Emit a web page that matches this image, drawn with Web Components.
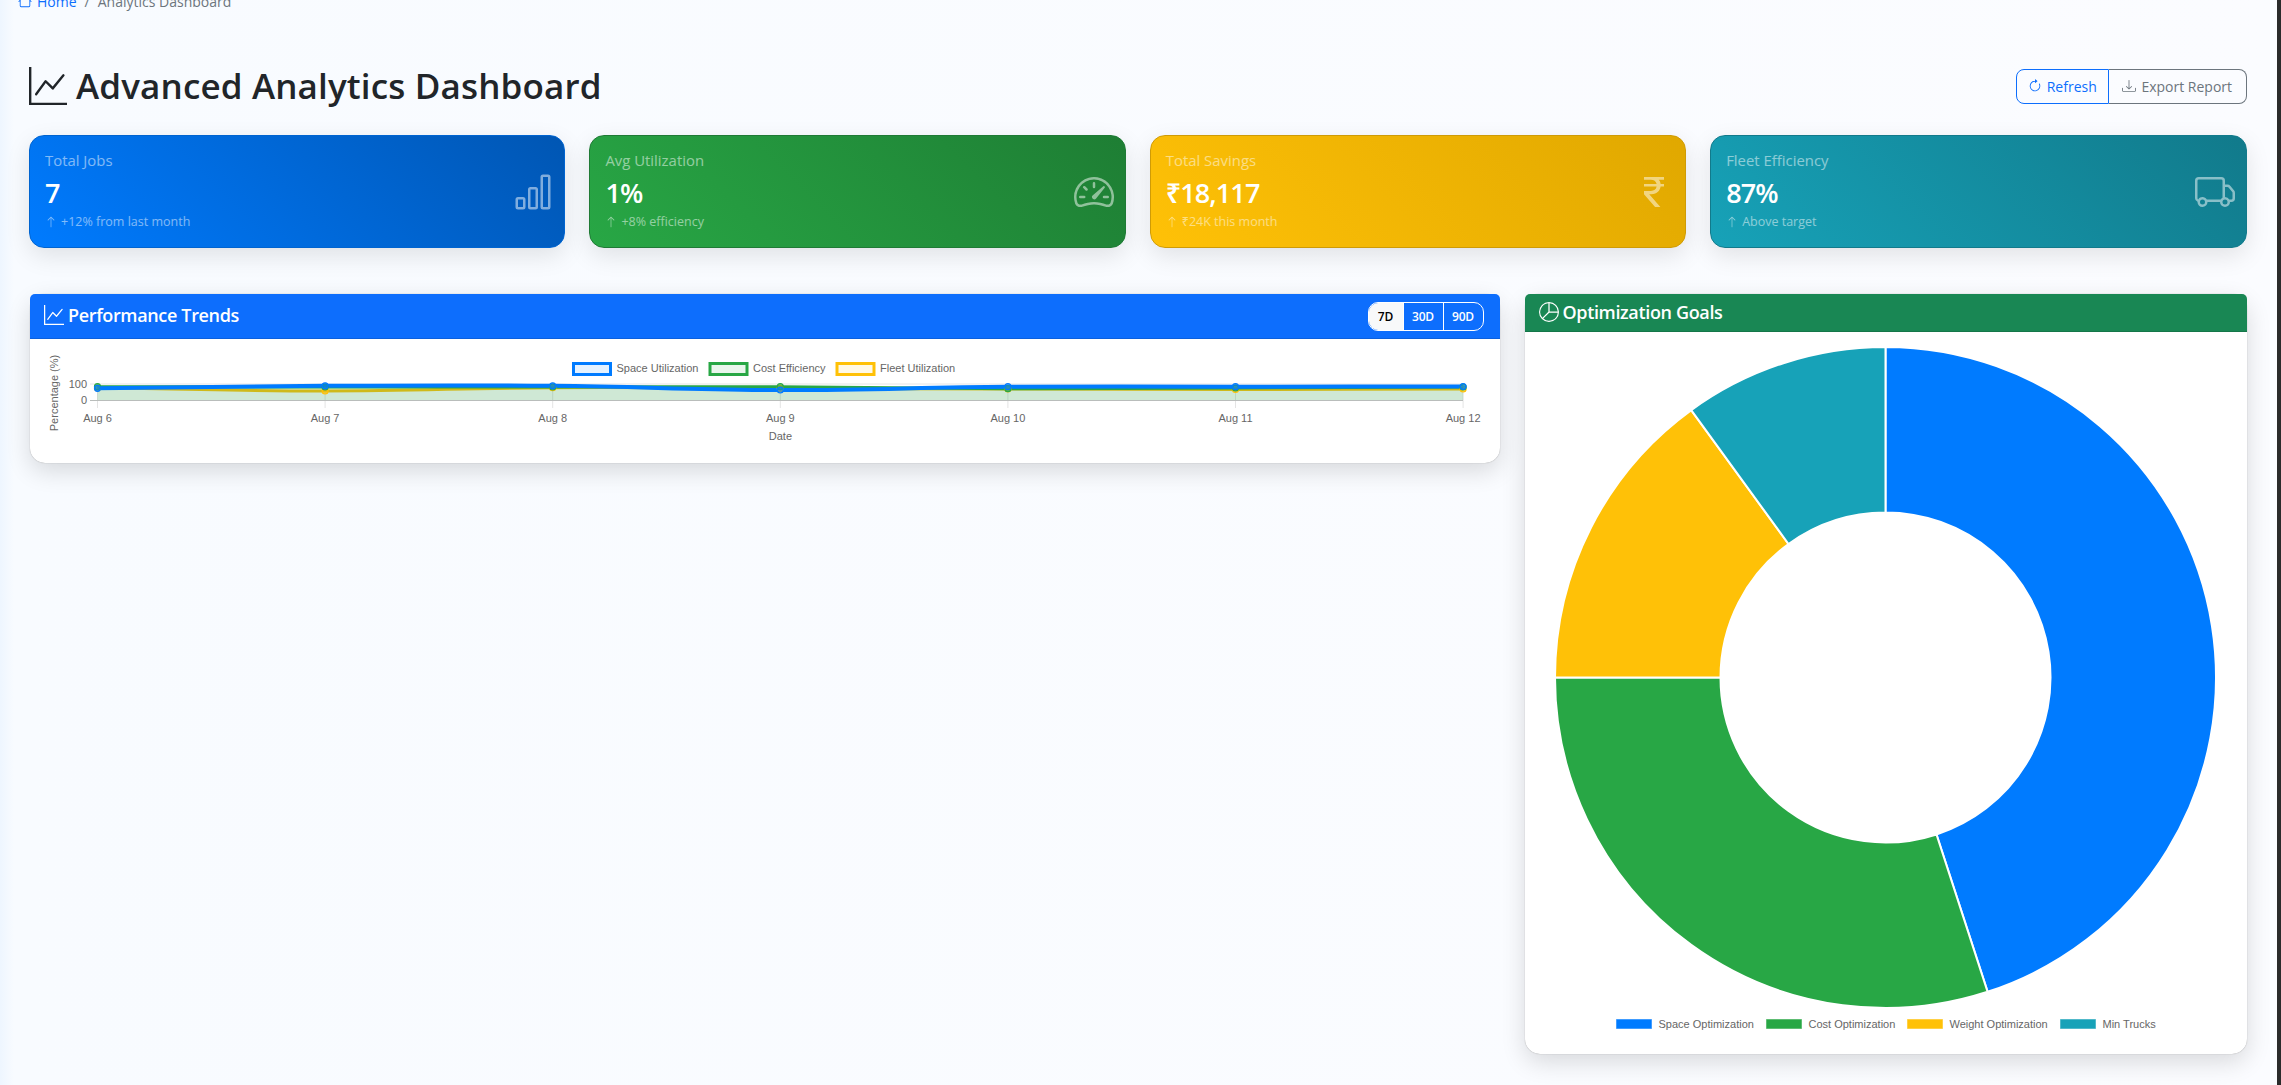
<!DOCTYPE html>
<html lang="en">
<head>
<meta charset="utf-8">
<title>Advanced Analytics Dashboard</title>
<style>
  html, body { margin: 0; height: 100%; }
  body { font-family: "Open Sans", "Noto Sans", sans-serif; color: #212529; }
</style>
</head>
<body>
<analytics-page>
  <nav-crumbs slot="crumbs"></nav-crumbs>
  <page-title slot="title">Advanced Analytics Dashboard</page-title>
  <action-buttons slot="actions"></action-buttons>

  <kpi-card slot="kpis" label="Total Jobs" value="7" note="+12% from last month" icon="bars" from="#007bff" to="#0056b3" edge="#0064d0"></kpi-card>
  <kpi-card slot="kpis" label="Avg Utilization" value="1%" note="+8% efficiency" icon="speed" from="#28a745" to="#1e7e34" edge="#1f7a35"></kpi-card>
  <kpi-card slot="kpis" label="Total Savings" value="₹18,117" note="₹24K this month" icon="rupee" from="#ffc107" to="#e0a800" edge="#cf9b06"></kpi-card>
  <kpi-card slot="kpis" label="Fleet Efficiency" value="87%" note="Above target" icon="truck" from="#17a2b8" to="#117a8b" edge="#127a8b"></kpi-card>

  <panel-card slot="left" heading="Performance Trends" icon="graph" color="#0d6efd" pad="10px">
    <range-picker slot="tools"></range-picker>
    <trend-chart></trend-chart>
  </panel-card>
  <panel-card slot="right" heading="Optimization Goals" icon="pie" color="#198754" pad="6.5px">
    <goals-chart></goals-chart>
  </panel-card>
</analytics-page>

<script>
// bootstrap-icons paths, all on a 16x16 box
const ICONS = {
  home: 'M8.707 1.5a1 1 0 0 0-1.414 0L.646 8.146a.5.5 0 0 0 .708.708L2 8.207V13.5A1.5 1.5 0 0 0 3.5 15h9a1.5 1.5 0 0 0 1.5-1.5V8.207l.646.647a.5.5 0 0 0 .708-.708L13 5.793V2.5a.5.5 0 0 0-.5-.5h-1a.5.5 0 0 0-.5.5v1.293L8.707 1.5ZM13 7.207V13.5a.5.5 0 0 1-.5.5h-9a.5.5 0 0 1-.5-.5V7.207l5-5 5 5Z',
  graph: 'M0 0h1v15h15v1H0V0Zm14.817 3.113a.5.5 0 0 1 .07.704l-4.5 5.5a.5.5 0 0 1-.74.037L7.06 6.767l-3.656 5.027a.5.5 0 0 1-.808-.588l4-5.5a.5.5 0 0 1 .758-.06l2.609 2.61 4.15-5.073a.5.5 0 0 1 .704-.07Z',
  bars: 'M4 11H2v3h2v-3zm5-4H7v7h2V7zm5-5v12h-2V2h2zm-2-1a1 1 0 0 0-1 1v12a1 1 0 0 0 1 1h2a1 1 0 0 0 1-1V2a1 1 0 0 0-1-1h-2zM6 7a1 1 0 0 1 1-1h2a1 1 0 0 1 1 1v7a1 1 0 0 1-1 1H7a1 1 0 0 1-1-1V7zm-5 4a1 1 0 0 1 1-1h2a1 1 0 0 1 1 1v3a1 1 0 0 1-1 1H2a1 1 0 0 1-1-1v-3z',
  speed: 'M8 4a.5.5 0 0 1 .5.5V6a.5.5 0 0 1-1 0V4.5A.5.5 0 0 1 8 4zM3.732 5.732a.5.5 0 0 1 .707 0l.915.914a.5.5 0 1 1-.708.708l-.914-.915a.5.5 0 0 1 0-.707zM2 10a.5.5 0 0 1 .5-.5h1.586a.5.5 0 0 1 0 1H2.5A.5.5 0 0 1 2 10zm9.5 0a.5.5 0 0 1 .5-.5h1.5a.5.5 0 0 1 0 1H12a.5.5 0 0 1-.5-.5zm.754-4.246a.389.389 0 0 0-.527-.02L7.547 9.31a.91.91 0 1 0 1.302 1.258l3.434-4.297a.389.389 0 0 0-.029-.518z M0 10a8 8 0 1 1 15.547 2.661c-.442 1.253-1.845 1.602-2.932 1.25C11.309 13.488 9.475 13 8 13c-1.474 0-3.31.488-4.615.911-1.087.352-2.49.003-2.932-1.25A7.988 7.988 0 0 1 0 10zm8-7a7 7 0 0 0-6.603 9.329c.203.575.923.876 1.68.63C4.397 12.533 6.358 12 8 12s3.604.532 4.923.96c.757.245 1.477-.056 1.68-.631A7 7 0 0 0 8 3z',
  rupee: 'M4 3.06h2.726c1.22 0 2.12.575 2.325 1.724H4v1.051h5.051C8.855 7.001 8 7.558 6.788 7.558H4v1.317L8.437 14h2.11L6.095 8.884h.855c2.316-.018 3.465-1.476 3.688-3.049H12V4.784h-1.345c-.08-.778-.357-1.335-.793-1.732H12V2H4v1.06Z',
  truck: 'M0 3.5A1.5 1.5 0 0 1 1.5 2h9A1.5 1.5 0 0 1 12 3.5V5h1.02a1.5 1.5 0 0 1 1.17.563l1.481 1.85a1.5 1.5 0 0 1 .329.938V10.5a1.5 1.5 0 0 1-1.5 1.5H14a2 2 0 1 1-4 0H5a2 2 0 1 1-3.998-.085A1.5 1.5 0 0 1 0 10.5v-7zm1.294 7.456A1.999 1.999 0 0 1 4.732 11h5.536a2.01 2.01 0 0 1 .732-.732V3.5a.5.5 0 0 0-.5-.5h-9a.5.5 0 0 0-.5.5v7a.5.5 0 0 0 .294.456zM12 10a2 2 0 0 1 1.732 1h.768a.5.5 0 0 0 .5-.5V8.35a.5.5 0 0 0-.11-.312l-1.48-1.85A.5.5 0 0 0 13.02 6H12v4zm-9 1a1 1 0 1 0 0 2 1 1 0 0 0 0-2zm9 0a1 1 0 1 0 0 2 1 1 0 0 0 0-2z',
  refresh: 'M8 3a5 5 0 1 0 4.546 2.914.5.5 0 0 1 .908-.417A6 6 0 1 1 8 2v1z M8 4.466V.534a.25.25 0 0 1 .41-.192l2.36 1.966c.12.1.12.284 0 .384L8.41 4.658A.25.25 0 0 1 8 4.466z',
  download: 'M.5 9.9a.5.5 0 0 1 .5.5v2.5a1 1 0 0 0 1 1h12a1 1 0 0 0 1-1v-2.5a.5.5 0 0 1 1 0v2.5a2 2 0 0 1-2 2H2a2 2 0 0 1-2-2v-2.5a.5.5 0 0 1 .5-.5z M7.646 11.854a.5.5 0 0 0 .708 0l3-3a.5.5 0 0 0-.708-.708L8.5 10.293V1.5a.5.5 0 0 0-1 0v8.793L5.354 8.146a.5.5 0 1 0-.708.708l3 3z',
  pie: 'M7.5 1.018a7 7 0 0 0-4.79 11.566L7.5 7.793V1.018zm1 0V7.5h6.482A7.001 7.001 0 0 0 8.5 1.018zM14.982 8.5H8.207l-4.79 4.79A7 7 0 0 0 14.982 8.5zM0 8a8 8 0 1 1 16 0A8 8 0 0 1 0 8z',
  up: 'M8 15a.5.5 0 0 0 .5-.5V2.707l3.146 3.147a.5.5 0 0 0 .708-.708l-4-4a.5.5 0 0 0-.708 0l-4 4a.5.5 0 1 0 .708.708L7.5 2.707V14.5a.5.5 0 0 0 .5.5z'
}

/**
 * Returns the svg markup for a named icon.
 *
 * @param {string} name - Key in ICONS.
 * @param {number} size - Width and height in pixels.
 * @returns {string} The markup.
 */
const icon = (name, size) => `<svg width="${size}" height="${size}" viewBox="0 0 16 16" fill="currentColor" style="flex:none;display:block"><path fill-rule="evenodd" d="${ICONS[name]}"/></svg>`

customElements.define('analytics-page', class extends HTMLElement {
  constructor () {
    super()
    this.attachShadow({ mode: 'open' }).innerHTML = `
      <style>
        :host { display: flex; height: 1085px; overflow: hidden; background: linear-gradient(90deg, #eef6ff 0, #f8fbff 14px, #fbfcff 100%); }
        main { flex: 1; min-width: 0; padding: 0 30.5px 0 29px; }
        .edge { width: 4px; background: #2b2b2b; }
        .head { display: flex; justify-content: space-between; align-items: center; margin-top: 55px; }
        .kpis { display: grid; grid-template-columns: repeat(4, 1fr); gap: 24px; margin-top: 28px; }
        .charts { display: grid; grid-template-columns: 1fr 722px; gap: 25px; margin-top: 46px; align-items: start; padding-left: 1px; }
      </style>
      <main>
        <slot name="crumbs"></slot>
        <div class="head"><slot name="title"></slot><slot name="actions"></slot></div>
        <div class="kpis"><slot name="kpis"></slot></div>
        <div class="charts"><div><slot name="left"></slot></div><div><slot name="right"></slot></div></div>
      </main>
      <div class="edge"></div>`
  }
})

customElements.define('nav-crumbs', class extends HTMLElement {
  constructor () {
    super()
    this.attachShadow({ mode: 'open' }).innerHTML = `
      <style>
        :host { display: flex; align-items: center; height: 20px; margin: -9px 0 -1px -11px; font-size: 14px; color: #6c757d; }
        a { display: flex; align-items: center; gap: 5px; color: #0d6efd; }
        i { font-style: normal; margin: 0 8px; }
      </style>
      <a>${icon('home', 14)}Home</a><i>/</i><span>Analytics Dashboard</span>`
  }
})

customElements.define('page-title', class extends HTMLElement {
  constructor () {
    super()
    this.attachShadow({ mode: 'open' }).innerHTML = `
      <style>
        :host { display: flex; align-items: center; gap: 9px; font-size: 35px; font-weight: 600; line-height: 42px; color: #212529; letter-spacing: .15px; }
      </style>
      ${icon('graph', 38)}<slot></slot>`
  }
})

customElements.define('action-buttons', class extends HTMLElement {
  constructor () {
    super()
    this.attachShadow({ mode: 'open' }).innerHTML = `
      <style>
        :host { display: flex; height: 35px; font-size: 14px; }
        span { display: flex; align-items: center; justify-content: center; gap: 5px; box-sizing: border-box; border: 1px solid; }
        .blue { width: 93.5px; color: #0d6efd; border-color: #0d6efd; border-radius: 8px 0 0 8px; font-weight: 500; }
        .gray { width: 137.5px; color: #6c757d; border-color: #6c757d; border-left: 0; border-radius: 0 8px 8px 0; }
      </style>
      <span class="blue">${icon('refresh', 14)}Refresh</span><span class="gray">${icon('download', 14)}Export Report</span>`
  }
})

customElements.define('kpi-card', class extends HTMLElement {
  constructor () {
    super()
    this.attachShadow({ mode: 'open' })
  }

  /**
   * Fills the shadow root from the attributes once the element is in the page.
   */
  connectedCallback () {
    const attr = (name) => this.getAttribute(name)
    this.shadowRoot.innerHTML = `
      <style>
        :host {
          display: flex; align-items: center; justify-content: space-between; box-sizing: border-box; height: 113px;
          padding: 0 11px 3px 15px; border: 1px solid ${attr('edge')}; border-radius: 15px; color: #fff;
          background: linear-gradient(45deg, ${attr('from')}, ${attr('to')});
          box-shadow: 0 8px 25px rgba(0, 0, 0, .1);
        }
        .label { font-size: 14.9px; line-height: 20px; font-weight: 500; opacity: .5; }
        .value { font-size: 27px; line-height: 34px; font-weight: 600; margin-top: 5.5px; letter-spacing: -.9px; }
        .note { display: flex; align-items: center; gap: 4px; font-size: 12.5px; line-height: 16px; opacity: .5; margin-top: 4px; }
        .icon { opacity: .5; margin-top: 3px; }
      </style>
      <div>
        <div class="label">${attr('label')}</div>
        <div class="value">${attr('value')}</div>
        <div class="note">${icon('up', 12)}<span>${attr('note')}</span></div>
      </div>
      <div class="icon">${icon(attr('icon'), 40)}</div>`
  }
})

customElements.define('panel-card', class extends HTMLElement {
  constructor () {
    super()
    this.attachShadow({ mode: 'open' })
  }

  /**
   * Fills the shadow root from the attributes once the element is in the page.
   */
  connectedCallback () {
    const attr = (name) => this.getAttribute(name)
    this.shadowRoot.innerHTML = `
      <style>
        :host { display: block; background: #fff; border-radius: 15px; box-shadow: 0 8px 25px rgba(0, 0, 0, .14), 0 0 1px rgba(0, 0, 0, .4); }
        header {
          display: flex; align-items: center; justify-content: space-between; padding: ${attr('pad')} 7px ${attr('pad')} 14px;
          background: ${attr('color')}; color: #fff; border-radius: 5px 5px 0 0; border-bottom: 1px solid rgba(0, 0, 0, .125);
        }
        h2 { display: flex; align-items: center; gap: 4px; margin: -1px 0 1px; font-size: 18px; line-height: 24px; font-weight: 600; letter-spacing: -.35px; }
      </style>
      <header><h2>${icon(attr('icon'), 20)}${attr('heading')}</h2><slot name="tools"></slot></header>
      <slot></slot>`
  }
})

customElements.define('range-picker', class extends HTMLElement {
  constructor () {
    super()
    this.attachShadow({ mode: 'open' }).innerHTML = `
      <style>
        :host { display: flex; height: 29px; margin: -4px 9px -4px 0; font-size: 12px; font-weight: 600; color: #fff; border: 1px solid #fff; border-radius: 10px; overflow: hidden; box-sizing: border-box; letter-spacing: -.2px; }
        span { display: flex; align-items: center; justify-content: center; width: 39px; }
        span + span { border-left: 1px solid #fff; }
        .on { width: 34px; background: #f8f9fa; color: #000; }
      </style>
      <span class="on">7D</span><span>30D</span><span>90D</span>`
  }
})

customElements.define('trend-chart', class extends HTMLElement {
  constructor () {
    super()
    const xs = [0, 1, 2, 3, 4, 5, 6].map((i) => 97.5 + i * 227.6)
    const labels = ['Aug 6', 'Aug 7', 'Aug 8', 'Aug 9', 'Aug 10', 'Aug 11', 'Aug 12']
    // drawn back to front, like the original chart
    const sets = [
      { color: '#ffc107', fill: 'rgba(255,193,7,.04)', ys: [388, 391, 387.7, 388.3, 389, 389.5, 389] },
      { color: '#28a745', fill: 'rgba(40,167,69,.18)', ys: [386.7, 387, 387, 386.7, 388.7, 388, 387] },
      { color: '#007bff', fill: 'rgba(0,123,255,.04)', ys: [388.3, 385.8, 385.8, 390, 386.7, 386.7, 386.5] }
    ]
    const base = 400.3
    const curve = (ys) => ys.slice(1).reduce((d, y, i) => {
      const s0 = (ys[i + 1] - ys[Math.max(i - 1, 0)]) * 0.2
      const s1 = (ys[Math.min(i + 2, ys.length - 1)] - ys[i]) * 0.2
      return `${d} C${xs[i] + 91},${ys[i] + s0} ${xs[i + 1] - 91},${y - s1} ${xs[i + 1]},${y}`
    }, `M${xs[0]},${ys[0]}`)

    const grid = xs.map((x) => `<line x1="${x}" x2="${x}" y1="384" y2="408" stroke="#e4e4e4"/>`).join('')
    const ticks = xs.map((x, i) => `<text x="${x}" y="421.5" text-anchor="middle">${labels[i]}</text>`).join('')
    const lines = sets.map((s) => `
      <path d="${curve(s.ys)} L${xs[6]},${base} L${xs[0]},${base}Z" fill="${s.fill}"/>
      <path d="${curve(s.ys)}" fill="none" stroke="${s.color}" stroke-width="${s.color === '#007bff' ? 4 : 3}"/>`).join('')
    const dots = sets.map((s) => s.ys.map((y, i) => `<circle cx="${xs[i]}" cy="${y}" r="3" fill="${s.color}" fill-opacity=".6" stroke="${s.color}" stroke-width="1.2"/>`).join('')).join('')
    const legend = [['#007bff', 'rgba(0,123,255,.1)', 572, 'Space Utilization'], ['#28a745', 'rgba(40,167,69,.1)', 708.5, 'Cost Efficiency'], ['#ffc107', 'rgba(255,193,7,.1)', 835.5, 'Fleet Utilization']]
      .map(([c, f, x, t]) => `<rect x="${x + 1.5}" y="363.5" width="37" height="11" fill="${f}" stroke="${c}" stroke-width="3"/><text x="${x + 44.5}" y="372">${t}</text>`).join('')

    this.attachShadow({ mode: 'open' }).innerHTML = `
      <style>
        :host { display: block; height: 123.5px; }
        svg { display: block; font: 11px "Liberation Sans", Arial, sans-serif; fill: #666; }
      </style>
      <svg width="1469" height="123" viewBox="30 339 1469 123">
        <line x1="90" x2="1463" y1="384" y2="384" stroke="#e4e4e4"/>
        ${grid}
        ${lines}
        <line x1="90" x2="1463" y1="400.5" y2="400.5" stroke="#b9bdbb"/>
        ${dots}
        <text x="87" y="388" text-anchor="end">100</text>
        <text x="87" y="404" text-anchor="end">0</text>
        ${ticks}
        <text x="780.4" y="440" text-anchor="middle">Date</text>
        <text transform="translate(58,393) rotate(-90)" text-anchor="middle">Percentage (%)</text>
        ${legend}
      </svg>`
  }
})

customElements.define('goals-chart', class extends HTMLElement {
  constructor () {
    super()
    const cx = 360.5
    const cy = 345.5
    const R = 330.5
    const r = 165
    const parts = [[45, '#007bff'], [30, '#28a745'], [15, '#ffc107'], [10, '#17a2b8']]
    const at = (rad, pct) => {
      const a = pct * Math.PI / 50
      return `${cx + rad * Math.sin(a)},${cy - rad * Math.cos(a)}`
    }
    let sum = 0
    const slices = parts.map(([p, c]) => {
      const from = sum
      sum += p
      const big = p > 50 ? 1 : 0
      return `<path d="M${at(R, from)} A${R},${R} 0 ${big} 1 ${at(R, sum)} L${at(r, sum)} A${r},${r} 0 ${big} 0 ${at(r, from)}Z" fill="${c}" stroke="#fff" stroke-width="2"/>`
    }).join('')
    const legend = [['#007bff', 91, 'Space Optimization'], ['#28a745', 241, 'Cost Optimization'], ['#ffc107', 382, 'Weight Optimization'], ['#17a2b8', 535, 'Min Trucks']]
      .map(([c, x, t]) => `<rect x="${x}" y="687" width="36" height="10" fill="${c}" stroke="rgba(255,255,255,.5)"/><text x="${x + 42.5}" y="695.5">${t}</text>`).join('')

    this.attachShadow({ mode: 'open' }).innerHTML = `
      <style>
        :host { display: block; height: 722px; }
        svg { display: block; font: 11px "Liberation Sans", Arial, sans-serif; fill: #666; }
      </style>
      <svg width="722" height="722" viewBox="0 0 722 722">${slices}${legend}</svg>`
  }
})
</script>
</body>
</html>
